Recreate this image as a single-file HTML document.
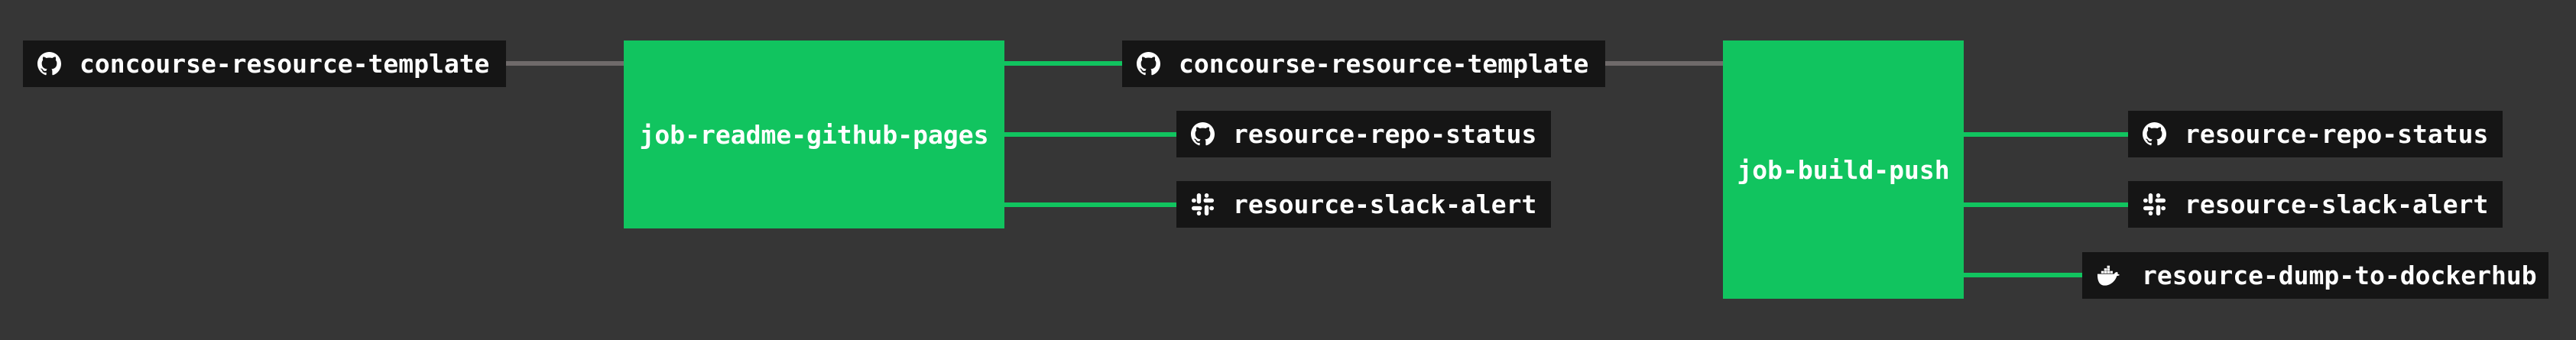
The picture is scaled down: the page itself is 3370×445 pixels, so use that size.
<!DOCTYPE html>
<html><head><meta charset="utf-8"><style>
html,body{margin:0;padding:0;width:3370px;height:445px;background:#363636;overflow:hidden}
.box{position:absolute;background:#151515;height:61px}
.box svg{position:absolute;left:19px;top:15px;width:31px;height:31px}
.box span{position:absolute;left:74px;top:0;height:61px;display:flex;align-items:center;color:#fff;font:bold 33px "DejaVu Sans Mono","Liberation Mono",monospace;white-space:nowrap}
.job{position:absolute;background:#11c45f;display:flex;align-items:center;justify-content:center;color:#fff;font:bold 33px "DejaVu Sans Mono","Liberation Mono",monospace;white-space:nowrap}
.g{position:absolute;height:6px;background:#11c45f}
.y{position:absolute;height:6px;background:#6f6a6a}
</style></head><body>
<svg width="0" height="0" style="position:absolute"><defs>
<symbol id="gh" viewBox="0 0 16 16"><path fill="#fff" d="M8 0C3.58 0 0 3.58 0 8c0 3.54 2.290 6.53 5.47 7.59.4.07.55-.17.55-.38v-1.34c-2.23.48-2.7-1.070-2.7-1.070-.36-.92-.89-1.17-.89-1.17-.73-.5.06-.49.06-.49.8.06 1.23.83 1.23.83.72 1.22 1.87.87 2.33.66.07-.52.28-.87.51-1.070-1.78-.2-3.65-.89-3.65-3.95 0-.87.31-1.59.82-2.15-.08-.2-.36-1.02.08-2.12 0 0 .67-.21 2.2.82.64-.18 1.32-.27 2-.27s1.36.09 2 .27c1.53-1.04 2.2-.82 2.2-.82.44 1.1.16 1.92.08 2.12.51.56.82 1.27.82 2.15 0 3.07-1.87 3.75-3.65 3.95.29.25.54.73.54 1.48v2.2c0 .21.15.46.55.38A8.01 8.01 0 0016 8c0-4.42-3.58-8-8-8z"/></symbol>
<symbol id="sl" viewBox="0 0 16 16"><g fill="#fff"><rect x="4" y="0.5" width="2.8" height="7" rx="1.4"/><rect x="9.2" y="8.5" width="2.8" height="7" rx="1.4"/><rect x="0.5" y="9.2" width="7" height="2.8" rx="1.4"/><rect x="8.5" y="4" width="7" height="2.8" rx="1.4"/><rect x="9.2" y="0.5" width="2.8" height="3" rx="1.4"/><rect x="12.5" y="9.2" width="3" height="2.8" rx="1.4"/><rect x="4" y="12.5" width="2.8" height="3" rx="1.4"/><rect x="0.5" y="4" width="3" height="2.8" rx="1.4"/></g></symbol>
<symbol id="dk" viewBox="0 0 16 16"><g fill="#fff"><rect x="3" y="5" width="1.8" height="1.6"/><rect x="5" y="5" width="1.8" height="1.6"/><rect x="7" y="5" width="1.8" height="1.6"/><rect x="9" y="5" width="1.8" height="1.6"/><rect x="5" y="3.2" width="1.8" height="1.6"/><rect x="7" y="3.2" width="1.8" height="1.6"/><rect x="7" y="1.4" width="1.8" height="1.6"/><path d="M0.5 7h11.3c.4-1 1.3-1.4 2.2-1.2.3.5.3 1 .1 1.3.7.1 1.2.4 1.4.6-.6.6-1.4.6-1.9.6C12.5 12 9 14.8 5.5 14.8 2 14.8.4 12 .5 7z"/></g></symbol>
</defs></svg>

<div class="y" style="left:662px;top:80px;width:154px"></div>
<div class="g" style="left:1314px;top:80px;width:154px"></div>
<div class="g" style="left:1314px;top:173px;width:225px"></div>
<div class="g" style="left:1314px;top:265px;width:225px"></div>
<div class="y" style="left:2100px;top:80px;width:154px"></div>
<div class="g" style="left:2569px;top:173px;width:215px"></div>
<div class="g" style="left:2569px;top:265px;width:215px"></div>
<div class="g" style="left:2569px;top:357px;width:155px"></div>

<div class="box" style="left:30px;top:53px;width:632px"><svg><use href="#gh"/></svg><span>concourse-resource-template</span></div>
<div class="job" style="left:816px;top:53px;width:498px;height:246px">job-readme-github-pages</div>
<div class="box" style="left:1468px;top:53px;width:632px"><svg><use href="#gh"/></svg><span>concourse-resource-template</span></div>
<div class="box" style="left:1539px;top:145px;width:490px"><svg><use href="#gh"/></svg><span>resource-repo-status</span></div>
<div class="box" style="left:1539px;top:237px;width:490px"><svg><use href="#sl"/></svg><span>resource-slack-alert</span></div>
<div class="job" style="left:2254px;top:53px;width:315px;height:338px">job-build-push</div>
<div class="box" style="left:2784px;top:145px;width:490px"><svg><use href="#gh"/></svg><span>resource-repo-status</span></div>
<div class="box" style="left:2784px;top:237px;width:490px"><svg><use href="#sl"/></svg><span>resource-slack-alert</span></div>
<div class="box" style="left:2724px;top:330px;width:610px"><svg><use href="#dk"/></svg><span style="left:78px">resource-dump-to-dockerhub</span></div>
</body></html>
